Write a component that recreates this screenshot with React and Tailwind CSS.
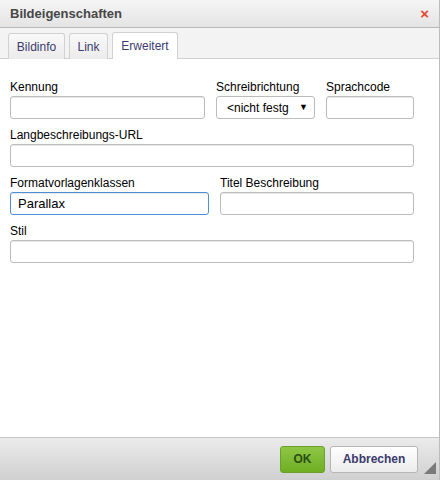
import React, { useState } from "react";

const Field = ({ label, value = "", focused = false, className = "" }) => (
    <div className={"flex flex-col gap-px " + className}>
        <label className="text-[12px] leading-[15px] text-[#000]">{label}</label>
        <input
            defaultValue={value}
            className={
                "h-[23px] w-full rounded-[3px] border bg-white px-[7px] text-[13px] text-[#000] outline-none shadow-[inset_0_1px_1px_rgba(0,0,0,0.1)] " +
                (focused ? "border-[#4d8fd6] shadow-[0_0_2px_#86b6e8]" : "border-[#bcbcbc]")
            }
        />
    </div>
);

const App = () => {
    const [tab, setTab] = useState("Erweitert");
    const tabs = [
        { name: "Bildinfo", w: "w-[57px]" },
        { name: "Link", w: "w-[39px]" },
        { name: "Erweitert", w: "w-[66px]" },
    ];

    return (
        <div
            className="flex h-[480px] w-[442px] bg-white"
            style={{ fontFamily: '"Liberation Sans", Arial, sans-serif' }}
        >
            <div className="flex h-full w-[440px] flex-col border-r border-[#bcbcbc]">
                {/* title */}
                <div className="flex h-[28px] shrink-0 items-center justify-between border-b border-[#b9b9b9] bg-gradient-to-b from-[#f5f5f5] to-[#e4e4e4] pl-[10px] pr-[10px]">
                    <span className="text-[13px] font-bold text-[#474747]">Bildeigenschaften</span>
                    <span className="text-[15px] font-bold leading-none text-[#e8452f]">×</span>
                </div>

                {/* tabs */}
                <div className="flex h-[31px] shrink-0 items-end gap-[4px] border-b border-[#d1d1d1] bg-[#f3f3f3] pl-[8px]">
                    {tabs.map((t) => (
                        <button
                            key={t.name}
                            onClick={() => setTab(t.name)}
                            className={
                                "-mb-px flex items-center justify-center rounded-t-[3px] border border-b-0 border-[#d1d1d1] text-[12px] text-[#3b3b6f] " +
                                t.w +
                                " " +
                                (tab === t.name ? "h-[27px] bg-white" : "h-[26px] bg-gradient-to-b from-[#f9f9f9] to-[#ebebeb]")
                            }
                        >
                            {t.name}
                        </button>
                    ))}
                </div>

                {/* body */}
                <div className="flex flex-1 flex-col gap-[9px] bg-white pl-[10px] pr-[25px] pt-[21px]">
                    <div className="flex gap-[11px]">
                        <Field label="Kennung" className="w-[195px]" />
                        <div className="flex w-[99px] flex-col gap-px">
                            <label className="text-[12px] leading-[15px] text-[#000]">Schreibrichtung</label>
                            <div className="flex h-[23px] items-center justify-between rounded-[3px] border border-[#bcbcbc] bg-white pl-[10px] pr-[6px] text-[12px] text-[#000]">
                                <span className="w-[66px] overflow-hidden whitespace-nowrap">&lt;nicht festg</span>
                                <span className="text-[9px]">▼</span>
                            </div>
                        </div>
                        <Field label="Sprachcode" className="w-[88px]" />
                    </div>
                    <Field label="Langbeschreibungs-URL" />
                    <div className="flex gap-[11px]">
                        <Field label="Formatvorlagenklassen" value="Parallax" focused className="w-[199px]" />
                        <Field label="Titel Beschreibung" className="flex-1" />
                    </div>
                    <Field label="Stil" />
                </div>

                {/* footer */}
                <div className="relative flex h-[43px] shrink-0 items-center justify-end gap-[5px] border-t border-[#c4c4c4] bg-gradient-to-b from-[#ebebeb] to-[#d0d0d0] pr-[21px]">
                    <button className="h-[27px] w-[45px] rounded-[3px] border border-[#6aa02b] bg-gradient-to-b from-[#8ec745] to-[#6fae22] text-[12px] font-bold text-[#2b4c12]">
                        OK
                    </button>
                    <button className="h-[27px] w-[88px] rounded-[3px] border border-[#b6b6b6] bg-gradient-to-b from-[#ffffff] to-[#ececec] text-[12px] font-bold text-[#3b3b6f]">
                        Abbrechen
                    </button>
                    <svg className="absolute bottom-[6px] right-[3px]" width="12" height="12" viewBox="0 0 12 12">
                        <polygon points="12,0 12,12 0,12" fill="#7a7a7a" />
                    </svg>
                </div>
            </div>
        </div>
    );
};

export default App;
